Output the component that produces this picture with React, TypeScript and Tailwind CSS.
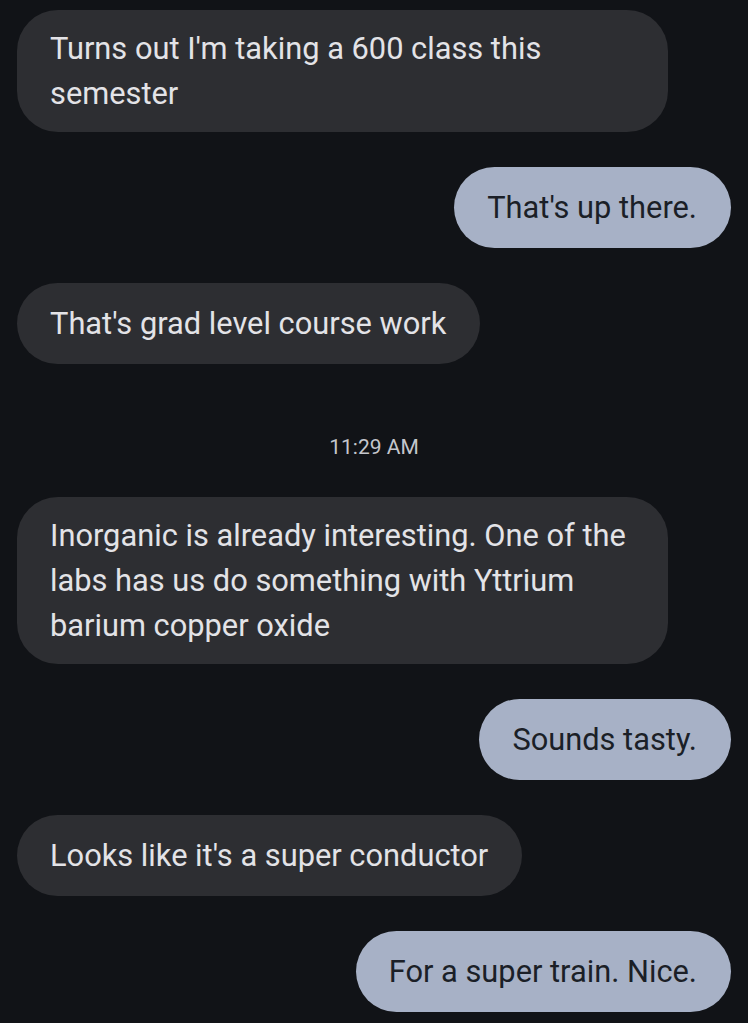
import React from "react";

type Msg = { kind: "in" | "out" | "time"; text: string };

const msgs: Msg[] = [
  { kind: "in", text: "Turns out I'm taking a 600 class this semester" },
  { kind: "out", text: "That's up there." },
  { kind: "in", text: "That's grad level course work" },
  { kind: "time", text: "11:29 AM" },
  { kind: "in", text: "Inorganic is already interesting. One of the labs has us do something with Yttrium barium copper oxide" },
  { kind: "out", text: "Sounds tasty." },
  { kind: "in", text: "Looks like it's a super conductor" },
  { kind: "out", text: "For a super train. Nice." },
];

export default function App() {
  return (
    <div
      className="min-h-[1023px] w-[748px] bg-[#111317] pt-[10px] px-[17px] flex flex-col"
      style={{ fontFamily: "Roboto, 'Noto Sans', sans-serif" }}
    >
      {msgs.map((m, i) => {
        if (m.kind === "time") {
          return (
            <div key={i} className="mt-[71px] mb-[38px] h-[24px] leading-[24px] text-center text-[#c4c6cc] text-[21px]">
              {m.text}
            </div>
          );
        }
        const isIn = m.kind === "in";
        return (
          <div key={i} className={`flex ${isIn ? "justify-start" : "justify-end"} ${i > 0 && msgs[i - 1].kind !== "time" ? "mt-[35px]" : ""}`}>
            <div
              className={`max-w-[651px] min-h-[81px] flex items-center rounded-[41px] pl-[33px] pr-[34px] py-[16px] text-[30.8px] leading-[45px] ${
                isIn ? "bg-[#2d2e32] text-[#e3e3e7]" : "bg-[#a7b1c6] text-[#1b1f27]"
              }`}
            >
              {m.text}
            </div>
          </div>
        );
      })}
    </div>
  );
}
